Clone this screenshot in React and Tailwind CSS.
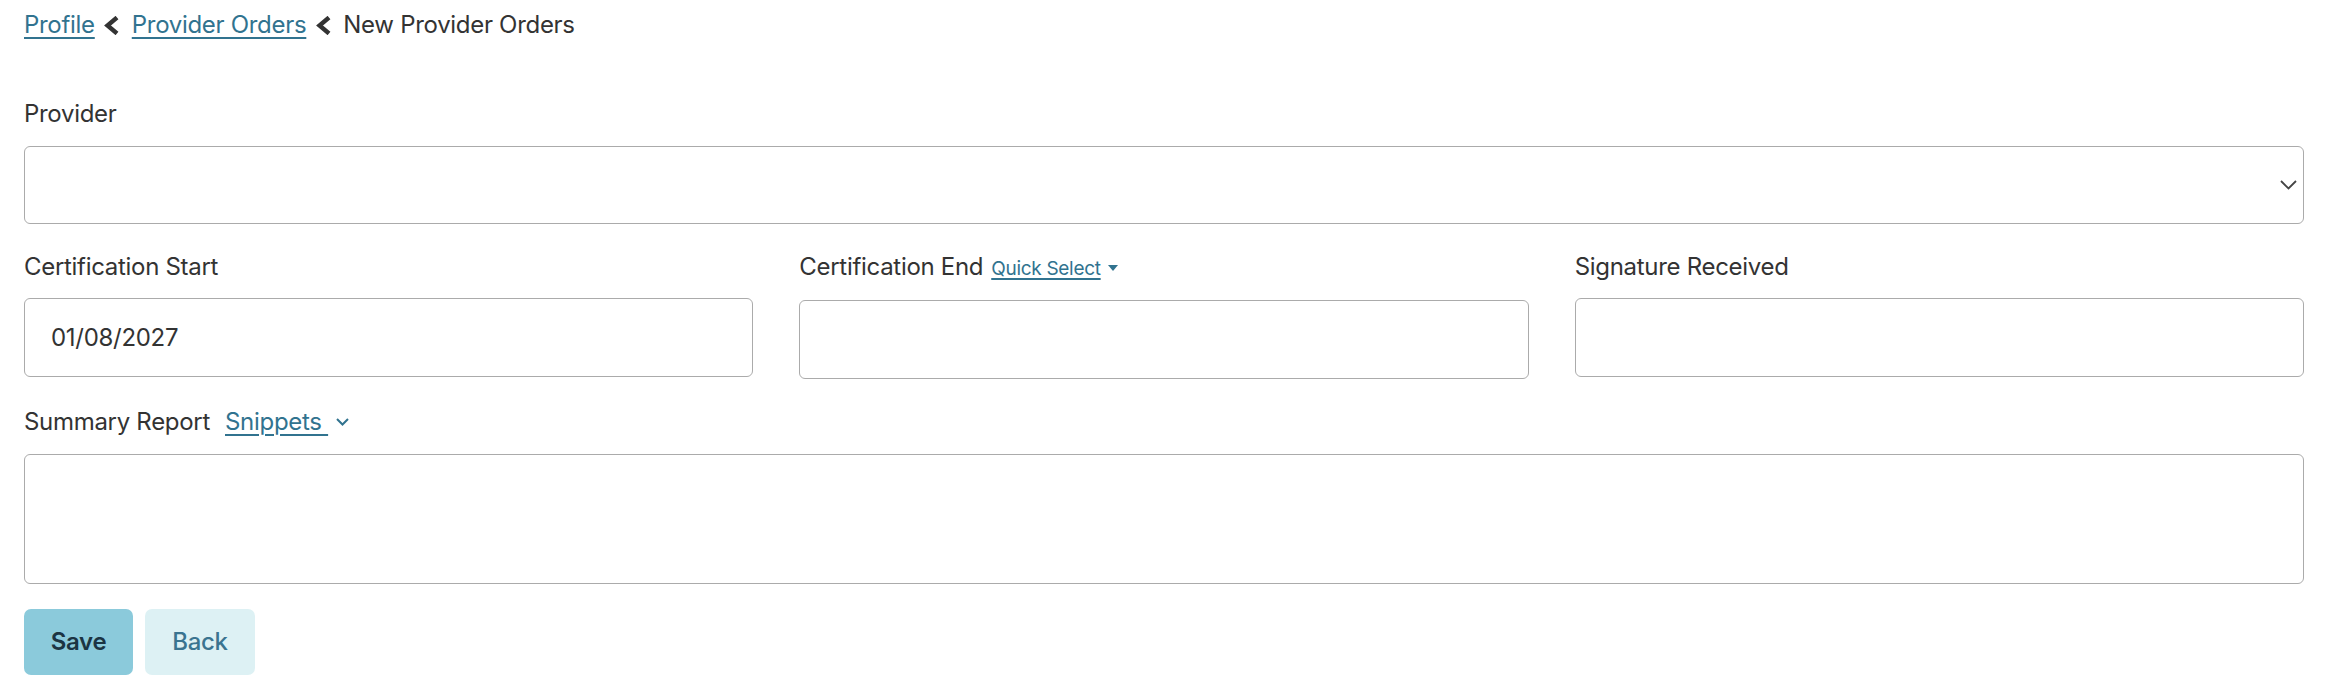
import React, { useState } from 'react';

const linkCls =
  "text-[#31738f] underline decoration-[1.5px] underline-offset-[4px] cursor-pointer";

// Bold left chevron used between breadcrumb items
const Crumb = ({ className }) => (
  <svg width="16" height="19" viewBox="0 0 16 19" className={`shrink-0 ${className}`}>
    <polyline points="14,1.5 4.5,9.5 14,17.5" fill="none" stroke="#333" strokeWidth="4.4" strokeLinejoin="miter" />
  </svg>
);

const Field = ({ label, children, value }) => (
  <div className="flex flex-col">
    <div className="mb-[13px] pt-[1px] leading-[36px]">{children || label}</div>
    <input
      type="text"
      defaultValue={value}
      className="h-[79px] w-full rounded-[6px] border border-[#ababab] bg-white px-[26px] text-[24px] text-[#333] outline-none"
    />
  </div>
);

const App = () => {
  const [summary, setSummary] = useState('');

  return (
    <div className="min-h-screen bg-white pl-6 pr-[26px] pt-[7px] font-['Inter',sans-serif] text-[24px] leading-[36px] tracking-[-0.3px] text-[#333]">
      {/* breadcrumb */}
      <nav className="flex items-center">
        <a className={linkCls}>Profile</a>
        <Crumb className="ml-[8px] mr-[13px]" />
        <a className={linkCls}>Provider Orders</a>
        <Crumb className="ml-[9px] mr-[12px]" />
        <span>New Provider Orders</span>
      </nav>

      {/* provider select */}
      <div className="mt-[52px]">
        <div className="mb-[14px] pt-[1px]">Provider</div>
        <div className="relative">
          <div className="h-[78px] w-full rounded-[6px] border border-[#ababab] bg-white" />
          <svg width="17" height="10" viewBox="0 0 17 10" className="absolute right-[7px] top-[34px]">
            <polyline points="1,1 8.5,8.5 16,1" fill="none" stroke="#444" strokeWidth="1.8" />
          </svg>
        </div>
      </div>

      {/* dates row */}
      <div className="mt-[24px] grid grid-cols-3 gap-x-[46px]">
        <Field label="Certification Start" value="01/08/2027" />
        <Field>
          <span>Certification End</span>
          <a className="ml-[8px] text-[19px] text-[#31738f] underline decoration-[1.5px] underline-offset-[3px] cursor-pointer">
            Quick Select
          </a>
          <svg width="10" height="6" viewBox="0 0 10 6" className="ml-[7px] inline-block align-middle">
            <polygon points="0,0 10,0 5,6" fill="#31738f" />
          </svg>
        </Field>
        <Field label="Signature Received" />
      </div>

      {/* summary */}
      <div className="mt-[24px]">
        <div className="mb-[14px] flex items-center pt-[1px]">
          <span>Summary Report</span>
          <a className={`ml-[15px] whitespace-pre ${linkCls}`}>{'Snippets '}</a>
          <svg width="13" height="8" viewBox="0 0 13 8" className="ml-[8px]">
            <polyline points="1,1 6.5,6.5 12,1" fill="none" stroke="#31738f" strokeWidth="2" />
          </svg>
        </div>
        <textarea
          value={summary}
          onChange={(e) => setSummary(e.target.value)}
          className="block h-[130px] w-full resize-none rounded-[6px] border border-[#ababab] bg-white px-[26px] py-[12px] text-[24px] text-[#333] outline-none"
        />
      </div>

      {/* actions */}
      <div className="mt-[25px] flex gap-[12px]">
        <button className="h-[66px] w-[109px] rounded-[7px] bg-[#8bcadb] text-[24px] font-semibold text-[#1b3443]">
          Save
        </button>
        <button className="h-[66px] w-[110px] rounded-[7px] bg-[#ddf1f4] text-[24px] font-medium text-[#3a7490]">
          Back
        </button>
      </div>
    </div>
  );
};

export default App;
